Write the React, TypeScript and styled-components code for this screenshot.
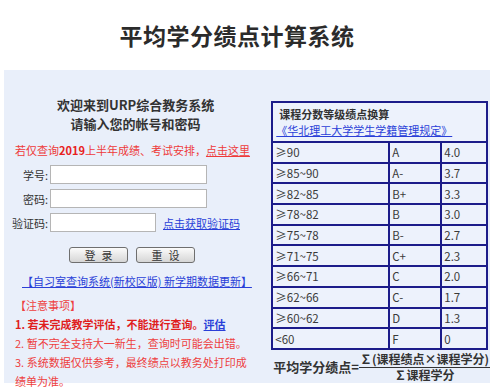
import styled, { createGlobalStyle } from "styled-components";

const Global = createGlobalStyle`
  body {
    margin: 0;
    background: #ffffff;
    font-family: "Noto Sans CJK SC", "Noto Sans", sans-serif;
  }
`;

const Page = styled.div`
  width: 494px;
  height: 388px;
  overflow: hidden;
`;

const Header = styled.div`
  height: 70px;
  display: flex;
  align-items: center;
  justify-content: center;
  padding-right: 20px;
  box-sizing: border-box;
  font-size: 23px;
  font-weight: 700;
  color: #2b2b2b;
  letter-spacing: 0.5px;
`;

const Panel = styled.div`
  margin: 0 4px;
  height: 313px;
  background: #e9effa;
  display: flex;
`;

const LeftCol = styled.div`
  width: 266px;
  display: flex;
  flex-direction: column;
  padding-top: 25px;
  box-sizing: border-box;
`;

const Welcome = styled.div`
  text-align: center;
  font-size: 13px;
  line-height: 19px;
  font-weight: 700;
  color: #333;
`;

const Notice = styled.div`
  margin: 9px 0 0 11px;
  font-size: 11px;
  line-height: 16px;
  color: #ee3b3b;
  white-space: nowrap;
  b { font-weight: 700; color: #e82020; }
  u { text-decoration: underline; }
`;

const Form = styled.div`
  display: grid;
  grid-template-columns: 44px auto;
  column-gap: 2px;
  row-gap: 5px;
  margin-top: 7px;
  align-items: center;
`;

const Label = styled.label`
  text-align: right;
  font-size: 11px;
  color: #333;
`;

const FieldRow = styled.div`
  display: flex;
  align-items: center;
  gap: 7px;
`;

const Input = styled.div<{ $w: number }>`
  width: ${(p) => p.$w}px;
  height: 19px;
  background: #fff;
  border: 1px solid #b5b5b5;
  box-sizing: border-box;
`;

const Link = styled.a<{ $size?: number }>`
  color: #2a3fd8;
  text-decoration: underline;
  font-size: ${(p) => p.$size ?? 11}px;
  cursor: pointer;
`;

const Buttons = styled.div`
  display: flex;
  gap: 8px;
  margin: 15px 0 0 65px;
`;

const Button = styled.button`
  width: 59px;
  height: 16px;
  padding: 0;
  border: 1px solid #6f6f6f;
  border-radius: 3px;
  background: linear-gradient(#fbfbfb, #d6d6d6);
  font-family: inherit;
  font-size: 11px;
  line-height: 14px;
  letter-spacing: 6px;
  text-indent: 6px;
  color: #333;
`;

const StudyLink = styled.div`
  margin: 10px 0 0 18px;
  font-size: 11px;
  line-height: 16px;
`;

const Notes = styled.div`
  margin: 7px 0 0 11px;
  font-size: 11px;
  line-height: 19px;
  color: #ee4040;
  width: 240px;
`;

const NoteLine = styled.div<{ $bold?: boolean }>`
  font-weight: ${(p) => (p.$bold ? 700 : 400)};
  color: ${(p) => (p.$bold ? "#e01e1e" : "#ee4040")};
`;

const RightCol = styled.div`
  padding: 31px 0 0 4px;
  display: flex;
  flex-direction: column;
`;

const Table = styled.table`
  width: 217px;
  border-collapse: collapse;
  border: 2px solid #1c1c8a;
  font-size: 11.5px;
  color: #3a3a3a;
  td {
    border: 2px solid #1c1c8a;
    height: 18.7px;
    padding: 0 2px;
    background: #edf2fc;
  }
`;

const HeadCell = styled.td`
  padding: 3px 3px 3px 3px !important;
  line-height: 16px;
`;

const HeadTitle = styled.div`
  font-size: 11px;
  font-weight: 700;
  color: #333;
  padding-left: 3px;
`;

const Formula = styled.div`
  display: flex;
  align-items: center;
  margin-top: 2px;
  padding-left: 2px;
  font-weight: 700;
  color: #333;
  font-size: 13px;
  white-space: nowrap;
`;

const Fraction = styled.div`
  display: flex;
  flex-direction: column;
  align-items: center;
  font-size: 12px;
  line-height: 14px;
`;

const Numerator = styled.div`
  border-bottom: 1.5px solid #333;
  padding: 0 1px 1px;
`;

const rows = [
  ["≥90", "A", "4.0"],
  ["≥85~90", "A-", "3.7"],
  ["≥82~85", "B+", "3.3"],
  ["≥78~82", "B", "3.0"],
  ["≥75~78", "B-", "2.7"],
  ["≥71~75", "C+", "2.3"],
  ["≥66~71", "C", "2.0"],
  ["≥62~66", "C-", "1.7"],
  ["≥60~62", "D", "1.3"],
  ["<60", "F", "0"],
];

export default function App() {
  return (
    <Page>
      <Global />
      <Header>平均学分绩点计算系统</Header>
      <Panel>
        <LeftCol>
          <Welcome>
            欢迎来到URP综合教务系统
            <br />
            请输入您的帐号和密码
          </Welcome>
          <Notice>
            若仅查询<b>2019</b>上半年成绩、考试安排，<u>点击这里</u>
          </Notice>
          <Form>
            <Label>学号:</Label>
            <Input $w={157} />
            <Label>密码:</Label>
            <Input $w={157} />
            <Label>验证码:</Label>
            <FieldRow>
              <Input $w={106} />
              <Link>点击获取验证码</Link>
            </FieldRow>
          </Form>
          <Buttons>
            <Button>登录</Button>
            <Button>重设</Button>
          </Buttons>
          <StudyLink>
            <Link>【自习室查询系统(新校区版) 新学期数据更新】</Link>
          </StudyLink>
          <Notes>
            <div>【注意事项】</div>
            <NoteLine $bold>
              1. 若未完成教学评估，不能进行查询。<Link>评估</Link>
            </NoteLine>
            <NoteLine>2. 暂不完全支持大一新生，查询时可能会出错。</NoteLine>
            <NoteLine>3. 系统数据仅供参考，最终绩点以教务处打印成绩单为准。</NoteLine>
          </Notes>
        </LeftCol>
        <RightCol>
          <Table>
            <tbody>
              <tr>
                <HeadCell colSpan={3}>
                  <HeadTitle>课程分数等级绩点换算</HeadTitle>
                  <Link>《华北理工大学学生学籍管理规定》</Link>
                </HeadCell>
              </tr>
              {rows.map((r) => (
                <tr key={r[0]}>
                  <td style={{ width: 111 }}>{r[0]}</td>
                  <td style={{ width: 46 }}>{r[1]}</td>
                  <td>{r[2]}</td>
                </tr>
              ))}
            </tbody>
          </Table>
          <Formula>
            平均学分绩点=
            <Fraction>
              <Numerator>∑(课程绩点×课程学分)</Numerator>
              <div>∑课程学分</div>
            </Fraction>
          </Formula>
        </RightCol>
      </Panel>
    </Page>
  );
}
